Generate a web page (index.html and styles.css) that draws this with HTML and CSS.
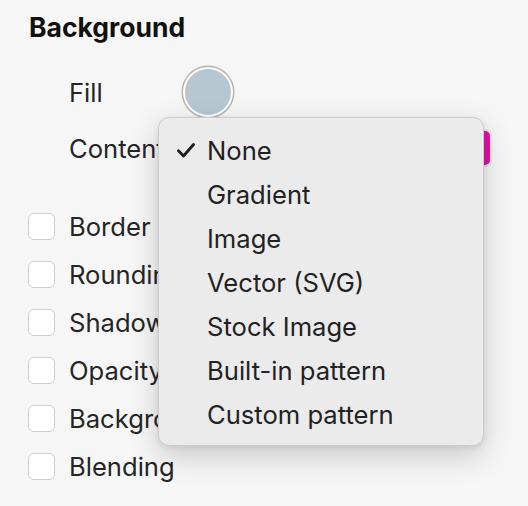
FILE: index.html
```html
<!DOCTYPE html>
<html>
<head>
<meta charset="utf-8">
<link rel="stylesheet" href="styles.css">
</head>
<body>
<div class="panel">
  <div class="title">Background</div>
  <div class="field fill-row">
    <span class="label">Fill</span>
    <span class="swatch"></span>
  </div>
  <div class="field content-row">
    <span class="label">Content</span>
    <span class="popup-btn"></span>
  </div>
  <div class="checks">
    <label class="check-row"><span class="box"></span><span>Border</span></label>
    <label class="check-row"><span class="box"></span><span>Rounding</span></label>
    <label class="check-row"><span class="box"></span><span>Shadow</span></label>
    <label class="check-row"><span class="box"></span><span>Opacity</span></label>
    <label class="check-row"><span class="box"></span><span>Background</span></label>
    <label class="check-row"><span class="box"></span><span>Blending</span></label>
  </div>
  <div class="menu">
    <div class="item checked"><svg class="tick" viewBox="0 0 18 15" width="18" height="15"><path d="M1.5 7.8 L6.5 13 L16.5 1.5" fill="none" stroke="#1d1d1d" stroke-width="2.8" stroke-linecap="round" stroke-linejoin="round"/></svg>None</div>
    <div class="item">Gradient</div>
    <div class="item">Image</div>
    <div class="item">Vector (SVG)</div>
    <div class="item">Stock Image</div>
    <div class="item">Built-in pattern</div>
    <div class="item">Custom pattern</div>
  </div>
</div>
</body>
</html>
```
FILE: styles.css
```css
html, body {
  margin: 0;
  padding: 0;
  background: #f6f6f6;
}
body {
  font-family: Inter, "Noto Sans", sans-serif;
  color: #252525;
  font-size: 25.6px;
  width: 528px;
  height: 506px;
  overflow: hidden;
}
.panel {
  position: relative;
  height: 506px;
  padding: 12px 36px 0 29px;
  box-sizing: border-box;
}
.title {
  font-weight: 700;
  font-size: 26.5px;
  color: #111;
  line-height: 30px;
  height: 30px;
}
.field {
  display: flex;
  align-items: center;
  padding-left: 40px;
}
.label {
  width: 114px;
  flex: none;
}
.fill-row {
  margin-top: 24px;
  height: 52px;
}
.swatch {
  width: 50px;
  height: 50px;
  box-sizing: border-box;
  border-radius: 50%;
  background: #b7c7d2;
  border: 2.5px solid #fff;
  box-shadow: 0 0 0 1.5px #b2b2b2;
}
.content-row {
  margin-top: 10px;
  height: 40px;
}
.popup-btn {
  flex: 1;
  height: 34px;
  border-radius: 7px;
  background: #df13a6;
  border: 2px solid #e4e4e4;
}
.checks {
  margin-top: 34px;
  margin-left: -1px;
  display: flex;
  flex-direction: column;
}
.check-row {
  display: flex;
  align-items: center;
  height: 48px;
  gap: 14px;
}
.box {
  width: 27px;
  height: 27px;
  box-sizing: border-box;
  border: 1px solid #cfcfcf;
  border-radius: 6px;
  background: #fff;
}
.menu {
  position: absolute;
  left: 158px;
  top: 117px;
  width: 326px;
  height: 329px;
  box-sizing: border-box;
  padding: 11px 0 10px;
  background: #ecebec;
  border: 1px solid #cdcbcc;
  border-radius: 11px;
  box-shadow: 0 10px 30px rgba(0,0,0,0.18), 0 2px 6px rgba(0,0,0,0.08);
}
.item {
  position: relative;
  height: 44px;
  line-height: 44px;
  padding-left: 48px;
  color: #222;
}
.tick {
  position: absolute;
  left: 18px;
  top: 14px;
}
```
